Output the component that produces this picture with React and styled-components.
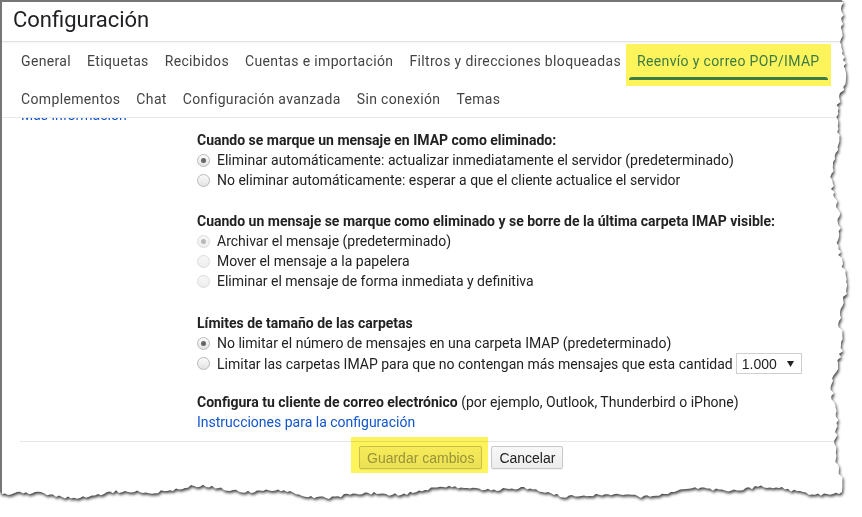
import React from 'react';
import styled, { createGlobalStyle } from 'styled-components';

const PAPER_W = 852;
const PAPER_H = 504;
const MARKER = '#fdf35b';

// jagged right and bottom edge of the torn screenshot
const tornEdge = (() => {
  let seed = 11;
  const rnd = () => {
    seed = (seed * 9301 + 49297) % 233280;
    return seed / 233280 - 0.5;
  };
  const pts = ['0px 0px'];
  let lastX = PAPER_W;
  for (let y = 0; y <= PAPER_H - 16; y += 3) {
    const x = PAPER_W - 13 + 5 * Math.sin(y / 37) + 2.5 * Math.sin(y / 11 + 1) + rnd() * 4;
    pts.push(`${x.toFixed(1)}px ${y}px`);
    lastX = x;
  }
  for (let x = Math.floor(lastX); x >= 0; x -= 3) {
    const y = PAPER_H - 12 + 4 * Math.sin(x / 43) + 2 * Math.sin(x / 13 + 2) + rnd() * 3;
    pts.push(`${x}px ${y.toFixed(1)}px`);
  }
  pts.push(`0px ${PAPER_H - 12}px`);
  return `polygon(${pts.join(', ')})`;
})();

const GlobalStyle = createGlobalStyle`
  html, body {
    margin: 0;
    padding: 0;
    background: #fff;
  }
  body {
    font-family: Roboto, "Liberation Sans", Arial, sans-serif;
    color: #222;
  }
`;

const Shadow = styled.div`
  width: ${PAPER_W}px;
  filter: drop-shadow(1px 2px 1.5px rgba(0, 0, 0, 0.75));
`;

const Paper = styled.div`
  box-sizing: border-box;
  width: ${PAPER_W}px;
  height: ${PAPER_H}px;
  background: #fff;
  border-left: 2px solid #767676;
  border-top: 2px solid #767676;
  clip-path: ${tornEdge};
  overflow: hidden;
`;

const TitleBar = styled.h1`
  margin: 0;
  height: 40px;
  box-sizing: border-box;
  padding: 0 0 5px 11px;
  line-height: 35px;
  font-size: 22px;
  font-weight: 400;
  color: #202124;
  border-bottom: 1px solid #e2e2e2;
  box-shadow: 0 1px 2px rgba(0, 0, 0, 0.05);
`;

const TabNav = styled.nav`
  padding-left: 11px;
  border-bottom: 1px solid #e8e8e8;
`;

const TabRow = styled.div`
  display: flex;
  height: 38px;
  &:last-child {
    height: 37px;
  }
`;

const Tab = styled.div`
  position: relative;
  isolation: isolate;
  display: flex;
  align-items: center;
  padding: 0 8px;
  font-size: 14px;
  letter-spacing: 0.35px;
  white-space: nowrap;
  color: ${(p) => (p.$active ? '#3b7b46' : '#444')};

  ${(p) =>
    p.$active &&
    `
    &::before {
      content: '';
      position: absolute;
      z-index: -1;
      top: 2px;
      bottom: -6px;
      left: -3px;
      right: -3px;
      background: ${MARKER};
    }
    &::after {
      content: '';
      position: absolute;
      left: 0;
      right: 0;
      bottom: 0;
      height: 3px;
      border-radius: 3px 3px 0 0;
      background: #3b7b46;
    }
  `}
`;

const Content = styled.div`
  display: grid;
  grid-template-columns: 195px 1fr;
  padding: 12px 0 9px;
  overflow: hidden;
  font-size: 14px;
`;

const SideColumn = styled.div`
  margin-top: -25px;
  padding-left: 19px;
  line-height: 20px;
`;

const Link = styled.a`
  color: #1155cc;
  text-decoration: none;
  cursor: pointer;
`;

const MainColumn = styled.div`
  display: flex;
  flex-direction: column;
`;

const Section = styled.section`
  margin-top: ${(p) => p.$space || 0}px;
  line-height: 20px;
`;

const Heading = styled.div`
  font-weight: 700;
  color: #222;
`;

const Normal = styled.span`
  font-weight: 400;
`;

const Option = styled.label`
  display: flex;
  align-items: center;
  min-height: 20px;
  color: #222;
  white-space: nowrap;
`;

const Radio = styled.span`
  position: relative;
  flex: none;
  box-sizing: border-box;
  width: 13px;
  height: 13px;
  margin-right: 7px;
  border-radius: 50%;
  border: 1px solid ${(p) => (p.$disabled ? '#dcdcdc' : '#b9b9b9')};
  background: ${(p) =>
    p.$disabled ? 'linear-gradient(#f7f7f7, #ededed)' : 'linear-gradient(#fbfbfb, #e3e3e3)'};

  &::after {
    content: '';
    display: ${(p) => (p.$checked ? 'block' : 'none')};
    position: absolute;
    top: 50%;
    left: 50%;
    width: 5px;
    height: 5px;
    margin: -2.5px 0 0 -2.5px;
    border-radius: 50%;
    background: ${(p) => (p.$disabled ? '#b8b8b8' : '#666')};
  }
`;

const Select = styled.span`
  display: inline-flex;
  align-items: center;
  justify-content: space-between;
  box-sizing: border-box;
  width: 66px;
  height: 21px;
  margin-left: 3px;
  padding: 0 7px 0 5px;
  border: 1px solid #cfcfcf;
  background: #fff;
  font-family: "Liberation Sans", Arial, sans-serif;
  font-size: 14px;
  color: #222;
`;

const Footer = styled.div`
  display: flex;
  gap: 9px;
  margin-left: 18px;
  padding: 4px 0 0 339px;
  border-top: 1px solid #e6e6e6;
`;

const Marked = styled.span`
  position: relative;
  display: inline-flex;

  &::after {
    content: '';
    position: absolute;
    top: -9px;
    bottom: -4px;
    left: -8px;
    right: -6px;
    background: ${MARKER};
    mix-blend-mode: multiply;
    pointer-events: none;
  }
`;

const Button = styled.button`
  box-sizing: border-box;
  height: 23px;
  padding: 0 7px;
  border: 1px solid #c8c8c8;
  border-radius: 2px;
  background: linear-gradient(#f8f8f8, #ececec);
  font-family: "Liberation Sans", Arial, sans-serif;
  font-size: 14px;
  color: ${(p) => (p.disabled ? '#9a9a9a' : '#222')};
  box-shadow: 0 1px 1px rgba(0, 0, 0, 0.06);
`;

const Arrow = () => (
  <svg width="7" height="6" viewBox="0 0 7 6">
    <polygon points="0,0 7,0 3.5,6" fill="#222" />
  </svg>
);

const tabsTop = [
  'General',
  'Etiquetas',
  'Recibidos',
  'Cuentas e importación',
  'Filtros y direcciones bloqueadas',
  'Reenvío y correo POP/IMAP',
];
const tabsBottom = ['Complementos', 'Chat', 'Configuración avanzada', 'Sin conexión', 'Temas'];
const ACTIVE = 'Reenvío y correo POP/IMAP';

const Choice = ({ checked, disabled, children }) => (
  <Option>
    <Radio $checked={checked} $disabled={disabled} />
    {children}
  </Option>
);

const App = () => (
  <>
    <GlobalStyle />
    <Shadow>
      <Paper>
        <TitleBar>Configuración</TitleBar>
        <TabNav>
          <TabRow>
            {tabsTop.map((t) => (
              <Tab key={t} $active={t === ACTIVE}>
                {t}
              </Tab>
            ))}
          </TabRow>
          <TabRow>
            {tabsBottom.map((t) => (
              <Tab key={t}>{t}</Tab>
            ))}
          </TabRow>
        </TabNav>

        <Content>
          <SideColumn>
            <Link>Más información</Link>
          </SideColumn>
          <MainColumn>
            <Section>
              <Heading>Cuando se marque un mensaje en IMAP como eliminado:</Heading>
              <Choice checked>
                Eliminar automáticamente: actualizar inmediatamente el servidor (predeterminado)
              </Choice>
              <Choice>No eliminar automáticamente: esperar a que el cliente actualice el servidor</Choice>
            </Section>

            <Section $space={21}>
              <Heading>
                Cuando un mensaje se marque como eliminado y se borre de la última carpeta IMAP visible:
              </Heading>
              <Choice checked disabled>
                Archivar el mensaje (predeterminado)
              </Choice>
              <Choice disabled>Mover el mensaje a la papelera</Choice>
              <Choice disabled>Eliminar el mensaje de forma inmediata y definitiva</Choice>
            </Section>

            <Section $space={22}>
              <Heading>Límites de tamaño de las carpetas</Heading>
              <Choice checked>No limitar el número de mensajes en una carpeta IMAP (predeterminado)</Choice>
              <Choice>
                Limitar las carpetas IMAP para que no contengan más mensajes que esta cantidad
                <Select>
                  1.000
                  <Arrow />
                </Select>
              </Choice>
            </Section>

            <Section $space={18}>
              <Heading>
                Configura tu cliente de correo electrónico{' '}
                <Normal>(por ejemplo, Outlook, Thunderbird o iPhone)</Normal>
              </Heading>
              <Link>Instrucciones para la configuración</Link>
            </Section>
          </MainColumn>
        </Content>

        <Footer>
          <Marked>
            <Button disabled>Guardar cambios</Button>
          </Marked>
          <Button>Cancelar</Button>
        </Footer>
      </Paper>
    </Shadow>
  </>
);

export default App;
